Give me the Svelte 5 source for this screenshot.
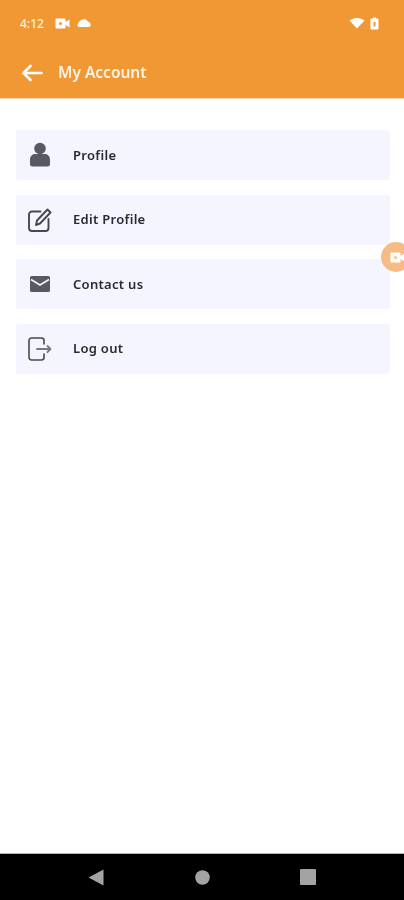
<script lang="ts">
  const items = [
    { label: 'Profile', icon: 'person' },
    { label: 'Edit Profile', icon: 'edit' },
    { label: 'Contact us', icon: 'mail' },
    { label: 'Log out', icon: 'logout' },
  ];
</script>

<div class="screen">
  <header class="appbar">
    <div class="status">
      <div class="status-left">
        <span class="time">4:12</span>
        <svg class="st-cam" width="16" height="11" viewBox="0 0 16 11" aria-hidden="true">
          <path fill="#fff" fill-rule="evenodd" d="M1.500 0.500h8a1 1 0 0 1 1 1v2.500l4-2.500v8l-4-2.500v2.500a1 1 0 0 1-1 1h-8a1 1 0 0 1-1-1v-8a1 1 0 0 1 1-1zM5.500 4a1.500 1.500 0 1 0 0 3 1.500 1.500 0 0 0 0-3z" />
        </svg>
        <svg width="15" height="10" viewBox="0 0 15 10" aria-hidden="true">
          <path fill="#fff" d="M2 9A1.800 1.800 0 0 1 1.200 5.800 5 5 0 0 1 4.300 2 4.500 4.500 0 0 1 11 3.800 3 3 0 0 1 13.500 7.500 1.800 1.800 0 0 1 12.500 9z" />
        </svg>
      </div>
      <div class="status-right">
        <svg width="16" height="12" viewBox="0 0 16 12" aria-hidden="true">
          <path fill="#fff" d="M0.500 3.500C4.800 0 11.200 0 15.500 3.500L8 11.500z" />
        </svg>
        <svg width="9" height="13" viewBox="0 0 9 13" aria-hidden="true">
          <path fill="#fff" fill-rule="evenodd" d="M3 0.500h3v1h1.500a1 1 0 0 1 1 1v9a1 1 0 0 1-1 1h-6a1 1 0 0 1-1-1v-9a1 1 0 0 1 1-1H3zM3.500 5v4.500h2V5z" />
        </svg>
      </div>
    </div>
    <div class="toolbar">
      <svg class="back" width="22" height="18" viewBox="0 0 22 18" aria-hidden="true">
        <path fill="none" stroke="#fff" stroke-width="2.600" stroke-linecap="round" stroke-linejoin="round" d="M20.500 9H2.500M9.500 2L2.500 9l7 7" />
      </svg>
      <span class="title">My Account</span>
    </div>
  </header>

  <main class="list">
    {#each items as item}
      <div class="row">
        <span class="icon">
          {#if item.icon === 'person'}
            <svg width="22" height="26" viewBox="0 0 22 26" aria-hidden="true">
              <circle cx="11" cy="6.500" r="5.800" fill="#585a63" />
              <path fill="#585a63" d="M1 22v-4.500C1 14 3.500 12 6.500 12h9c3 0 5.500 2 5.500 5.500V22a2.500 2.500 0 0 1-2.500 2.500h-15A2.500 2.500 0 0 1 1 22z" />
            </svg>
          {:else if item.icon === 'edit'}
            <svg width="24" height="24" viewBox="0 0 24 24" aria-hidden="true">
              <path fill="none" stroke="#47484f" stroke-width="1.900" stroke-linejoin="round" stroke-linecap="round" d="M12.500 3.500H4a3 3 0 0 0-3 3V20a3 3 0 0 0 3 3h13.500a3 3 0 0 0 3-3v-9" />
              <path fill="none" stroke="#47484f" stroke-width="1.900" stroke-linejoin="round" d="M8 17l1-4.500L19.500 1.500l3 3L12 15.500z" />
            </svg>
          {:else if item.icon === 'mail'}
            <svg width="20" height="16" viewBox="0 0 20 16" aria-hidden="true">
              <path fill="#585a63" d="M1.500 0h17A1.500 1.500 0 0 1 20 1.500v13a1.500 1.500 0 0 1-1.500 1.500h-17A1.500 1.500 0 0 1 0 14.500v-13A1.500 1.500 0 0 1 1.500 0z" />
              <path fill="none" stroke="#f4f5fe" stroke-width="1.600" d="M1 3.500L10 9l9-5.500" />
            </svg>
          {:else}
            <svg width="24" height="24" viewBox="0 0 24 24" aria-hidden="true">
              <path fill="none" stroke="#47484f" stroke-width="1.600" stroke-linecap="round" stroke-linejoin="round" d="M16 7V3.500A2.500 2.500 0 0 0 13.500 1H3.500A2.500 2.500 0 0 0 1 3.500v17A2.500 2.500 0 0 0 3.500 23h10a2.500 2.500 0 0 0 2.500-2.500V17" />
              <path fill="none" stroke="#77797f" stroke-width="1.800" stroke-linecap="round" stroke-linejoin="round" d="M9 12h13M19.500 9l3 3-3 3" />
            </svg>
          {/if}
        </span>
        <span class="label">{item.label}</span>
      </div>
    {/each}
  </main>

  <nav class="navbar">
    <svg width="16" height="17" viewBox="0 0 16 17" aria-hidden="true"><path fill="#a3a3a3" d="M15.500 0.500v16L0.500 8.500z" /></svg>
    <svg width="15" height="15" viewBox="0 0 15 15" aria-hidden="true"><circle cx="7.500" cy="7.500" r="7.300" fill="#a3a3a3" /></svg>
    <svg width="16" height="16" viewBox="0 0 16 16" aria-hidden="true"><rect width="16" height="16" rx="1" fill="#a3a3a3" /></svg>
  </nav>

  <div class="bubble" aria-hidden="true">
    <svg width="16" height="11" viewBox="0 0 16 11">
      <path fill="#fff" fill-rule="evenodd" d="M1.500 0.500h8a1 1 0 0 1 1 1v2.500l4-2.500v8l-4-2.500v2.500a1 1 0 0 1-1 1h-8a1 1 0 0 1-1-1v-8a1 1 0 0 1 1-1zM5.500 4a1.500 1.500 0 1 0 0 3 1.500 1.500 0 0 0 0-3z" />
    </svg>
  </div>
</div>

<style>
  :global(body) {
    margin: 0;
    background: #fff;
  }

  /* the reference is a soft, upscaled capture */
  .screen {
    position: relative;
    width: 404px;
    height: 900px;
    overflow: hidden;
    display: flex;
    flex-direction: column;
    font-family: "Noto Sans", "Open Sans", sans-serif;
    filter: blur(0.45px);
  }

  .appbar {
    height: 99px;
    flex: none;
    box-sizing: border-box;
    background: #f09834;
    border-bottom: 1px solid #fbd9ae;
    color: #fff;
    display: flex;
    flex-direction: column;
  }

  .status {
    height: 46px;
    flex: none;
    box-sizing: border-box;
    padding: 0 25px 0 20px;
    display: flex;
    align-items: center;
    justify-content: space-between;
  }

  .status-left {
    display: flex;
    align-items: center;
    gap: 6px;
  }

  .status-right {
    display: flex;
    align-items: center;
    gap: 5px;
  }

  .time {
    font-size: 12px;
    font-weight: 500;
    color: #fdeedd;
  }

  .st-cam {
    margin-left: 5px;
  }

  .toolbar {
    flex: 1;
    display: flex;
    align-items: center;
    padding-left: 21px;
    padding-top: 1px;
  }

  .back {
    margin-right: 15px;
  }

  .title {
    font-size: 15.500px;
    font-weight: 600;
    line-height: 1;
    color: #fdf3e6;
  }

  .list {
    flex: 1;
    padding: 31px 14px 0 16px;
    display: flex;
    flex-direction: column;
    gap: 14.500px;
  }

  .row {
    height: 50px;
    background: #f4f5fe;
    border-radius: 3px;
    display: flex;
    align-items: center;
  }

  .icon {
    width: 48px;
    flex: none;
    display: flex;
    justify-content: center;
  }

  .label {
    margin-left: 9px;
    font-size: 13px;
    font-weight: 600;
    letter-spacing: 0.3px;
    color: #2a2b30;
    position: relative;
    top: -0.5px;
  }

  .navbar {
    height: 47px;
    flex: none;
    background: #000;
    border-top: 1px solid #b5b5b5;
    box-sizing: border-box;
    display: grid;
    grid-template-columns: 16px 15px 16px;
    justify-content: space-between;
    align-items: center;
    padding: 0 88px;
  }

  .bubble {
    position: absolute;
    left: 381px;
    top: 242px;
    width: 30px;
    height: 30px;
    border-radius: 50%;
    background: #f5bd85;
    display: flex;
    align-items: center;
    padding-left: 9px;
    box-sizing: border-box;
  }
</style>
